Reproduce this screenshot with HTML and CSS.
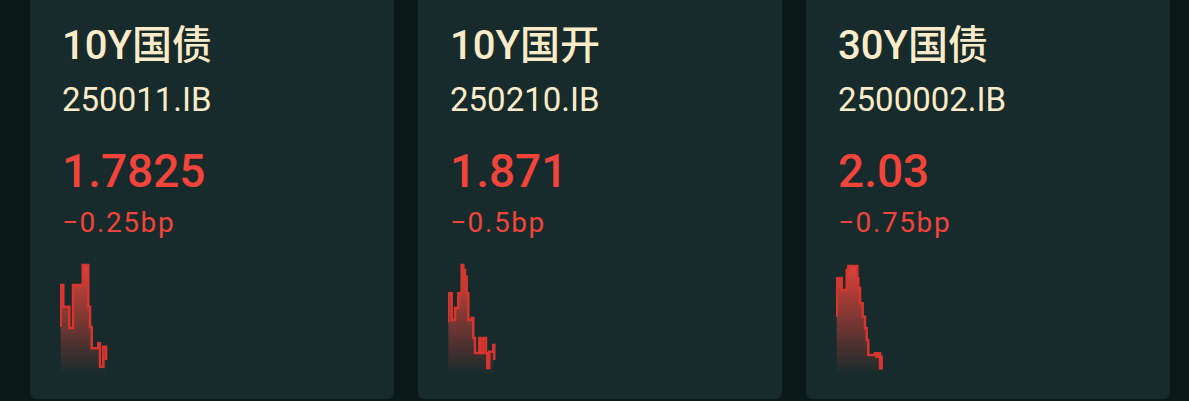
FILE: index.html
```html
<!DOCTYPE html>
<html lang="zh">
<head>
    <meta charset="UTF-8">
    <meta name="viewport" content="width=device-width, initial-scale=1.0">
    <title>债券行情</title>
    <link rel="stylesheet" href="styles.css">
</head>
<body>
    <div class="cards">
        <div class="card">
            <div class="name">10Y国债</div>
            <div class="code">250011.IB</div>
            <div class="price">1.7825</div>
            <div class="change">−0.25bp</div>
            <svg class="spark" width="56" height="115" viewBox="0 0 56 115">
                <defs>
                    <linearGradient id="fill1" x1="0" y1="0" x2="0" y2="1">
                        <stop offset="0" stop-color="#e8443a" stop-opacity="0.95"/>
                        <stop offset="1" stop-color="#e8443a" stop-opacity="0"/>
                    </linearGradient>
                </defs>
                <path d="M0.7,65 V23 H3.3 V44.7 H9.3 V66 H13 V23 H22.7 V3 H28.3 V44.7 H30 V65 H31.7 V86.3 H38.3 V81.3 H40 V104.7 H43.3 V84.7 H46 V98 V113 H0.7 Z" fill="url(#fill1)"/>
                <path d="M0.7,65 V23 H3.3 V44.7 H9.3 V66 H13 V23 H22.7 V3 H28.3 V44.7 H30 V65 H31.7 V86.3 H38.3 V81.3 H40 V104.7 H43.3 V84.7 H46 V98" fill="none" stroke="#d8352e" stroke-width="2.5"/>
            </svg>
        </div>
        <div class="card">
            <div class="name">10Y国开</div>
            <div class="code">250210.IB</div>
            <div class="price">1.871</div>
            <div class="change">−0.5bp</div>
            <svg class="spark" width="56" height="115" viewBox="0 0 56 115">
                <defs>
                    <linearGradient id="fill2" x1="0" y1="0" x2="0" y2="1">
                        <stop offset="0" stop-color="#e8443a" stop-opacity="0.95"/>
                        <stop offset="1" stop-color="#e8443a" stop-opacity="0"/>
                    </linearGradient>
                </defs>
                <path d="M0.3,60 V31.3 H3.7 V58 H7 V46 H10.3 V31.3 H13.7 V3 H15.3 V8 H17 V14.7 H18.7 V31.3 H20.3 V58 H23.7 V56 H25.3 V76 H27 V91 H31.3 V76 H32.7 V91 H35.3 V76 H38 V91 H39.3 V106 H41.3 V89.7 H45.3 V83 H46.3 V98 V113 H0.3 Z" fill="url(#fill2)"/>
                <path d="M0.3,60 V31.3 H3.7 V58 H7 V46 H10.3 V31.3 H13.7 V3 H15.3 V8 H17 V14.7 H18.7 V31.3 H20.3 V58 H23.7 V56 H25.3 V76 H27 V91 H31.3 V76 H32.7 V91 H35.3 V76 H38 V91 H39.3 V106 H41.3 V89.7 H45.3 V83 H46.3 V98" fill="none" stroke="#d8352e" stroke-width="2.5"/>
            </svg>
        </div>
        <div class="card">
            <div class="name">30Y国债</div>
            <div class="code">2500002.IB</div>
            <div class="price">2.03</div>
            <div class="change">−0.75bp</div>
            <svg class="spark" width="56" height="115" viewBox="0 0 56 115">
                <defs>
                    <linearGradient id="fill3" x1="0" y1="0" x2="0" y2="1">
                        <stop offset="0" stop-color="#e8443a" stop-opacity="0.95"/>
                        <stop offset="1" stop-color="#e8443a" stop-opacity="0"/>
                    </linearGradient>
                </defs>
                <path d="M0.7,54.7 V16.3 H5.7 V28 H10.7 V8 H12.3 V4 H21.3 V16.3 H22.3 V26 H24 V41.3 H26.7 V54.7 H29 V66.3 H30.7 V78 H32.3 V93 H39 V91.3 H40.7 V94.7 H42.3 V91.3 H44 V106.3 H45.7 V94.7 H46.7 V113 H0.7 Z" fill="url(#fill3)"/>
                <path d="M0.7,54.7 V16.3 H5.7 V28 H10.7 V8 H12.3 V4 H21.3 V16.3 H22.3 V26 H24 V41.3 H26.7 V54.7 H29 V66.3 H30.7 V78 H32.3 V93 H39 V91.3 H40.7 V94.7 H42.3 V91.3 H44 V106.3 H45.7 V94.7 H46.7" fill="none" stroke="#d8352e" stroke-width="2.5"/>
            </svg>
        </div>
    </div>
</body>
</html>
```

FILE: styles.css
```css
body { margin: 0; background: #0a1918; font-family: Roboto, "Noto Sans CJK SC", sans-serif; overflow: hidden; }
.cards { display: flex; gap: 24px; padding-left: 30px; margin-top: -20px; }
.card { width: 364px; height: 419px; box-sizing: border-box; padding: 42px 0 0 32px; background: #172b2c; border-radius: 6px; display: flex; flex-direction: column; align-items: flex-start; }
.name { font-size: 40px; line-height: 48px; font-weight: 500; color: #fcebc9; }
.code { font-size: 33px; line-height: 40px; margin-top: 10px; color: #fcebc9; }
.price { font-size: 46px; line-height: 54px; margin-top: 24px; font-weight: 500; color: #f2443a; }
.change { font-size: 28px; line-height: 30px; margin-top: 10px; letter-spacing: 1.6px; color: #f2443a; }
.spark { display: block; margin: 24px 0 0 -2px; }
```
